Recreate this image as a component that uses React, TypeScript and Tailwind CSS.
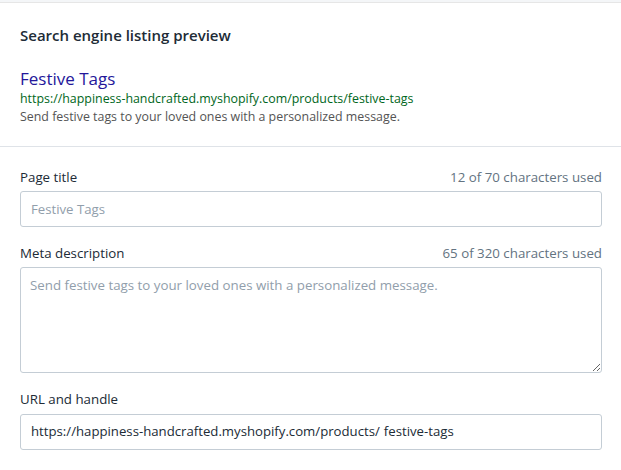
import React from "react";

export default function App() {
  const font = { fontFamily: '"Open Sans", "Noto Sans", sans-serif' };
  return (
    <div className="w-[621px] h-[470px] bg-[#f4f6f8] pt-[2px] overflow-hidden" style={font}>
      <div className="bg-white border-t border-[#e6e6e6] h-full">
        <div className="pl-5 pr-[19px] pt-[20px] pb-[20px] border-b border-[#dfe3e8]">
          <h2 className="text-[15px] leading-[24px] font-semibold text-[#212b36]">Search engine listing preview</h2>
          <div className="mt-[20px] text-[17px] leading-[23px] text-[#24179a]">Festive Tags</div>
          <div className="text-[12.4px] leading-[18px] text-[#006621]">https://happiness-handcrafted.myshopify.com/products/festive-tags</div>
          <div className="text-[12.4px] leading-[18px] text-[#545454]">Send festive tags to your loved ones with a personalized message.</div>
        </div>
        <div className="pl-5 pr-[19px] pt-[20px]">
          <div className="flex justify-between text-[13.3px] leading-[20px] text-[#212b36]">
            <span>Page title</span>
            <span className="text-[#637381]">12 of 70 characters used</span>
          </div>
          <input
            className="block mt-[4px] w-full h-[36px] border border-[#c4cdd5] rounded-[3px] px-[10px] text-[13.2px] text-[#212b36] placeholder:text-[#919eab] outline-none"
            placeholder="Festive Tags"
          />
          <div className="mt-[16px] flex justify-between text-[13.3px] leading-[20px] text-[#212b36]">
            <span>Meta description</span>
            <span className="text-[#637381]">65 of 320 characters used</span>
          </div>
          <textarea
            className="block mt-[4px] w-full h-[106px] border border-[#c4cdd5] rounded-[3px] px-[9px] py-[7px] text-[13.3px] leading-[20px] text-[#212b36] placeholder:text-[#919eab] outline-none resize-y"
            placeholder="Send festive tags to your loved ones with a personalized message."
          />
          <div className="mt-[16px] text-[13.3px] leading-[20px] text-[#212b36]">URL and handle</div>
          <div className="mt-[5px] w-full h-[36px] border border-[#c4cdd5] rounded-[3px] px-[10px] flex items-center text-[13.2px] text-[#212b36]">
            <span>https://happiness-handcrafted.myshopify.com/products/</span>
            <span className="ml-[4px]">festive-tags</span>
          </div>
        </div>
      </div>
    </div>
  );
}
